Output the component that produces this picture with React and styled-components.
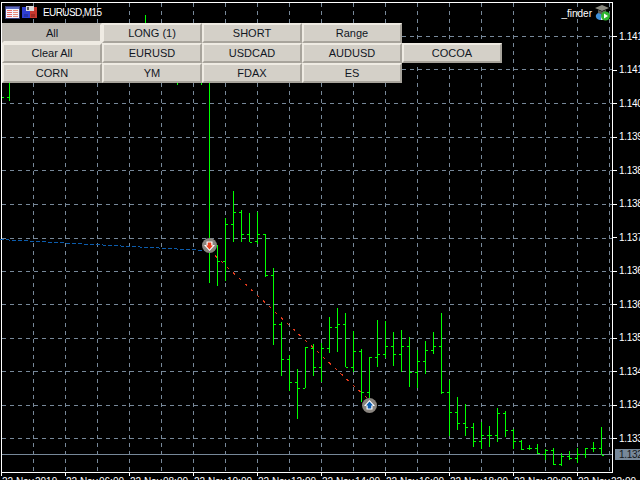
import React from "react";
import styled, { createGlobalStyle } from "styled-components";

const Global = createGlobalStyle`
  html, body { margin: 0; padding: 0; background: #000; overflow: hidden; }
  #root { width: 640px; height: 480px; }
`;

const bars = [
  [9,60,101,97,null],[145,15,60,null,null],[177,60,85,null,null],[201,60,85,null,null],
  [209,70,283,null,null],[217,245,286,null,261],[225,218,281,261,224],[233,191,242,224,212],
  [241,210,242,212,234],[249,213,242,234,242],[257,212,244,241,234],[265,234,277,234,275],
  [273,268,345,275,324],[281,322,376,324,359],[289,355,391,359,382],[297,369,419,382,388],
  [305,347,388,388,347],[313,344,376,348,367],[321,343,382,367,348],[329,317,353,348,327],
  [337,308,352,327,324],[345,313,367,324,367],[353,331,372,367,351],[361,349,402,351,392],
  [369,357,399,392,357],[377,320,367,357,354],[385,321,358,354,346],[393,332,366,346,354],
  [401,330,372,354,346],[409,337,387,346,372],[417,350,388,372,361],[425,341,374,361,350],
  [433,332,354,350,346],[441,313,394,346,392],[449,380,436,392,412],[457,397,430,412,423],
  [465,404,436,423,427],[473,423,447,427,441],[481,422,449,441,435],[489,426,447,435,435],
  [497,408,442,435,413],[505,411,437,413,430],[513,429,449,430,441],[521,440,450,441,449],
  [529,445,450,448,448],[537,444,454,448,453],[545,449,460,454,450],[553,448,465,450,464],
  [561,453,466,464,456],[569,451,460,456,458],[577,448,463,458,454],[585,448,458,454,448],
  [593,442,452,448,448],[601,427,455,448,455],
];

const gridXs = Array.from({ length: 19 }, (_, i) => 33 + i * 32);
const gridYs = [36, 69, 103, 137, 170, 204, 238, 271, 304, 338, 371, 405, 438];
const prices = ["1.141","1.141","1.140","1.139","1.138","1.138","1.137","1.136","1.136","1.135","1.134","1.134","1.133"];
const timeLabels = ["22 Nov","2019","22 Nov","06:00","22 Nov","08:00","22 Nov","10:00","22 Nov","12:00","22 Nov","14:00","22 Nov","16:00","22 Nov","18:00","22 Nov","20:00","22 Nov","22:00"];
const buttons = [
  ["All","LONG (1)","SHORT","Range"],
  ["Clear All","EURUSD","USDCAD","AUDUSD","COCOA"],
  ["CORN","YM","FDAX","ES"],
];

const Screen = styled.div`
  position: relative;
  width: 640px;
  height: 480px;
  background: #000;
  overflow: hidden;
  font-family: "Liberation Sans", Arial, sans-serif;
`;
const Layout = styled.div`
  display: grid;
  grid-template-columns: 613px 27px;
  grid-template-rows: 473px 7px;
  width: 640px;
  height: 480px;
`;
const Plot = styled.div`
  position: relative;
  border: 1px solid #fff;
  margin: 2px 0 0 1px;
  box-sizing: border-box;
`;
const ChartSvg = styled.svg`
  position: absolute;
  left: -2px;
  top: -3px;
  display: block;
`;
const PriceAxis = styled.div`
  padding-top: 20px;
  display: flex;
  flex-direction: column;
  overflow: hidden;
`;
const PriceRow = styled.div`
  height: 33.5px;
  display: flex;
  align-items: center;
  gap: 2px;
  color: #fff;
  font-size: 10px;
  letter-spacing: -0.3px;
  line-height: 12px;
  flex: none;
  white-space: nowrap;
`;
const Tick = styled.span`
  width: 4px;
  height: 1px;
  background: #fff;
  flex: none;
`;
const TimeAxis = styled.div`
  display: flex;
  padding-left: 1px;
  grid-column: 1 / 3;
  overflow: hidden;
`;
const TimeCell = styled.div`
  width: 32px;
  flex: none;
  box-sizing: border-box;
  padding-left: ${(p) => (p.$date ? "1px" : "2px")};
  padding-top: 2px;
  color: #fff;
  font-size: 10px;
  line-height: 13px;
  white-space: nowrap;
`;
const Header = styled.div`
  position: absolute;
  left: 5px;
  top: 5px;
  display: flex;
  align-items: center;
  gap: 2px;
  height: 15px;
`;
const Symbol = styled.span`
  margin-left: 4px;
  color: #fff;
  font-size: 10px;
  letter-spacing: -0.6px;
`;
const Expert = styled.div`
  position: absolute;
  right: 30px;
  top: 5px;
  display: flex;
  align-items: center;
  gap: 3px;
  height: 16px;
`;
const ExpertName = styled.span`
  color: #fff;
  font-size: 10px;
`;
const Panel = styled.div`
  position: absolute;
  left: 2px;
  top: 23px;
  display: flex;
  flex-direction: column;
`;
const ButtonRow = styled.div`
  display: flex;
`;
const PanelButton = styled.button`
  width: 100px;
  height: 20px;
  box-sizing: border-box;
  padding: 0;
  margin: 0;
  font-family: "Liberation Sans", Arial, sans-serif;
  font-size: 11px;
  line-height: 14px;
  color: #11161f;
  background: ${(p) => (p.$pressed ? "#bdb9b2" : "#d4d0c8")};
  border-style: solid;
  border-width: 2px;
  border-color: ${(p) =>
    p.$pressed
      ? "#bdb9b2 #efebe3 #efebe3 #bdb9b2"
      : "#efebe3 #a8a49c #a8a49c #efebe3"};
`;
const PriceTag = styled.div`
  position: absolute;
  left: 615px;
  top: 449px;
  width: 25px;
  height: 11px;
  background: #778899;
  color: #14181c;
  font-size: 10px;
  letter-spacing: -0.3px;
  line-height: 11px;
  padding-left: 4px;
  box-sizing: border-box;
  overflow: hidden;
  white-space: nowrap;
`;

const TableIcon = () => (
  <svg width="15" height="13" viewBox="0 0 15 13">
    <rect x="0.5" y="0.5" width="14" height="12" fill="#f4f4ff" stroke="#3c3c78" />
    <rect x="1" y="1" width="13" height="2" fill="#5a6ac0" />
    <path d="M2 4h5v1H2zM2 6h5v1H2zM2 8h5v1H2zM2 10h5v1H2z" fill="#e86a6a" />
    <path d="M8 4h5v1H8zM8 6h5v1H8zM8 8h5v1H8zM8 10h5v1H8z" fill="#e88a7a" />
  </svg>
);
const SaveIcon = () => (
  <svg width="15" height="13" viewBox="0 0 15 13">
    <rect x="0" y="1" width="8" height="11" fill="#2f3fd0" />
    <rect x="8" y="1" width="7" height="11" fill="#c8392f" />
    <rect x="4" y="0" width="8" height="5" fill="#d8d8d8" />
    <rect x="5" y="1" width="2" height="3" fill="#555" />
    <rect x="2" y="8" width="4" height="3" fill="#2434a8" />
    <rect x="9" y="8" width="4" height="3" fill="#a02c24" />
  </svg>
);
const CapIcon = () => (
  <svg width="15" height="16" viewBox="0 0 15 16">
    <path d="M1 10c2-3 5-3 6 0l-1 5c-3 0-6-2-5-5z" fill="#3f8fd8" />
    <path d="M6 11l3-3 2 2-2 5-3 0z" fill="#e8e8e8" />
    <path d="M0 3l7-3 7 3-7 3z" fill="#8a8a80" />
    <path d="M3 5v3l4 1.5L11 8V5L7 6.5z" fill="#5d5d55" />
    <circle cx="10.5" cy="11" r="4.5" fill="#2fb52f" />
    <path d="M9 8.5l4 2.5-4 2.5z" fill="#fff" />
  </svg>
);

const Marker = ({ x, y, up }) => (
  <g transform={`translate(${x} ${y})`}>
    <circle r="7.5" fill="#8a857f" />
    {up ? (
      <>
        <path d="M0-5.5L5.5 0.5H3V4H-3V0.5H-5.5Z" fill="#fff" />
        <path d="M0-4L3.5 0H1.8V3H-1.8V0H-3.5Z" fill="#0b5bb0" />
      </>
    ) : (
      <>
        <path d="M0 5.5L5.5-0.5H3V-4H-3V-0.5H-5.5Z" fill="#fff" />
        <path d="M0 4L3.5 0H1.8V-3H-1.8V0H-3.5Z" fill="#e8401c" />
      </>
    )}
  </g>
);

const Chart = () => (
  <ChartSvg width="613" height="480" viewBox="0 0 613 480" shapeRendering="crispEdges">
    {gridXs.map((x) => (
      <line key={x} x1={x + 0.5} y1="3" x2={x + 0.5} y2="472" stroke="#778899" strokeDasharray="4 4" />
    ))}
    {gridYs.map((y) => (
      <line key={y} x1="2" y1={y + 0.5} x2="612" y2={y + 0.5} stroke="#778899" strokeDasharray="4 4" />
    ))}
    <line x1="2" y1="454.5" x2="612" y2="454.5" stroke="#778899" />
    <line x1="0" y1="239.5" x2="205" y2="250.5" stroke="#0c5cac" strokeDasharray="4 2" />
    <line x1="209" y1="250" x2="369" y2="400" stroke="#e23a1c" strokeDasharray="3 5.2" />
    {bars.map(([x, h, l, o, c]) => (
      <g key={x} stroke="#00ff00">
        <line x1={x + 0.5} y1={h} x2={x + 0.5} y2={l} />
        {o != null && <line x1={x - 2} y1={o + 0.5} x2={x} y2={o + 0.5} />}
        {c != null && <line x1={x + 1} y1={c + 0.5} x2={x + 3} y2={c + 0.5} />}
      </g>
    ))}
    <line x1="2" y1="97.5" x2="4" y2="97.5" stroke="#00ff00" />
    <g shapeRendering="auto">
      <Marker x={209.5} y={245.5} />
      <Marker x={369.5} y={405.5} up />
    </g>
    {Array.from({ length: 10 }, (_, i) => (
      <line key={i} x1={1.5 + i * 64} y1="472" x2={1.5 + i * 64} y2="476" stroke="#fff" />
    ))}
  </ChartSvg>
);

export default function App() {
  return (
    <Screen>
      <Global />
      <Layout>
        <Plot>
          <Chart />
        </Plot>
        <PriceAxis>
          {prices.map((p, i) => (
            <PriceRow key={i}>
              <Tick />
              {p}
            </PriceRow>
          ))}
        </PriceAxis>
        <TimeAxis>
          {timeLabels.map((t, i) => (
            <TimeCell key={i} $date={i % 2 === 0}>{t}</TimeCell>
          ))}
        </TimeAxis>
      </Layout>
      <Header>
        <TableIcon />
        <SaveIcon />
        <Symbol>EURUSD,M15</Symbol>
      </Header>
      <Expert>
        <ExpertName>_finder</ExpertName>
        <CapIcon />
      </Expert>
      <Panel>
        {buttons.map((row, r) => (
          <ButtonRow key={r}>
            {row.map((b) => (
              <PanelButton key={b} $pressed={b === "All"}>{b}</PanelButton>
            ))}
          </ButtonRow>
        ))}
      </Panel>
      <PriceTag>1.132</PriceTag>
    </Screen>
  );
}
